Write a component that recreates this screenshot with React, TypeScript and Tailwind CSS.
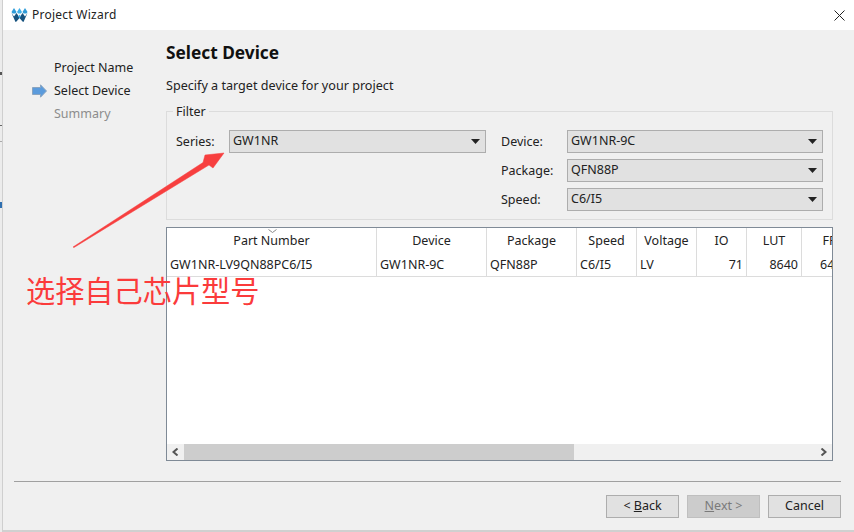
import React from 'react';

const font = { fontFamily: '"Noto Sans", "Noto Sans CJK SC", sans-serif' };

const columns = [
  { label: 'Part Number', value: 'GW1NR-LV9QN88PC6/I5', width: 'w-[210px]', right: false },
  { label: 'Device', value: 'GW1NR-9C', width: 'w-[110px]', right: false },
  { label: 'Package', value: 'QFN88P', width: 'w-[90px]', right: false },
  { label: 'Speed', value: 'C6/I5', width: 'w-[60px]', right: false },
  { label: 'Voltage', value: 'LV', width: 'w-[60px]', right: false },
  { label: 'IO', value: '71', width: 'w-[50px]', right: true },
  { label: 'LUT', value: '8640', width: 'w-[55px]', right: true },
  { label: 'FF', value: '6480', width: 'w-[55px]', right: true },
];

function Combo({ value, width }: { value: string; width: string }) {
  return (
    <div className={`${width} h-[23px] shrink-0 flex items-center justify-between bg-[#e1e1e1] border border-[#adadad] pl-[3px] pr-[4px] text-[12.5px] text-[#222]`}>
      <span>{value}</span>
      <svg width="9" height="5" viewBox="0 0 9 5" className="mr-[1px]"><path d="M0 0h9L4.5 5z" fill="#222" /></svg>
    </div>
  );
}

function Logo() {
  return (
    <svg width="17" height="16" viewBox="0 0 17 16">
      <path d="M0.500 5L3 1l2.500 4-1 1.500h-3z" fill="#2f9bd8" />
      <path d="M6 5l2.500-4L11 5l-1 1.500H7z" fill="#3fb0e8" />
      <path d="M11.500 5L14 1l2.500 4-1 1.500h-3z" fill="#2f9bd8" />
      <path d="M0.500 6L3 9.500 5.500 6l3 4.500L11.500 6 14 9.500 16.500 6l-4 9-1-.5L8.500 11l-3 3.500-1 .5z" fill="#17537f" />
      <path d="M8.500 7.500L9.800 9.500 8.500 11.200 7.200 9.500z" fill="#3fb0e8" />
    </svg>
  );
}

export default function App() {
  return (
    <div style={font} className="relative w-[854px] h-[532px] overflow-hidden bg-[#f0f0f0] flex text-[#222]">
      {/* sliver of the window behind */}
      <div className="relative w-[3px] shrink-0 bg-[#ececec] border-r border-[#cfcfcf]">
        <div className="absolute left-0 top-[72px] w-[2px] h-[3px] bg-[#555]" />
        <div className="absolute left-0 top-[125px] w-[2px] h-[1px] bg-[#666]" />
        <div className="absolute left-0 top-[141px] w-[2px] h-[1px] bg-[#aaa]" />
        <div className="absolute left-0 top-[202px] w-[2px] h-[6px] bg-[#2f6fb0]" />
      </div>

      <div className="flex-1 flex flex-col border-b-2 border-[#d0d0d0]">
        {/* title bar */}
        <div className="h-[30px] shrink-0 bg-white flex items-center pl-[8px] pr-[9px]">
          <Logo />
          <span className="ml-[4px] text-[12px] tracking-[0.25px]">Project Wizard</span>
          <svg className="ml-auto" width="11" height="11" viewBox="0 0 11 11"><path d="M0.500 0.500l10 10M10.500 0.500l-10 10" stroke="#222" strokeWidth="1" fill="none" /></svg>
        </div>

        <div className="flex-1 flex">
          {/* steps */}
          <div className="w-[163px] shrink-0 pt-[29px] pl-[29px] flex flex-col gap-[5px] text-[12.5px] leading-[18px]">
            <div className="pl-[22px]">Project Name</div>
            <div className="flex items-center gap-[7px]">
              <svg width="15" height="14" viewBox="0 0 15 14">
                <path d="M0.500 3.500h8V0.800L14.500 7l-6 6.200V10.500h-8z" fill="#5b9bdc" stroke="#8aa4bf" strokeWidth="1" />
              </svg>
              <span>Select Device</span>
            </div>
            <div className="pl-[22px] text-[#8c8c8c]">Summary</div>
          </div>

          {/* page */}
          <div className="w-[667px] shrink-0 pt-[11px] flex flex-col">
            <div className="text-[17.3px] leading-[24px] font-bold text-[#111]">Select Device</div>
            <div className="mt-[12px] text-[12.6px] leading-[18px]">Specify a target device for your project</div>

            {/* filter group */}
            <div className="relative mt-[16px] h-[109px] shrink-0 border border-[#dcdcdc] px-[9px] pt-[18px] flex justify-between text-[12.5px]">
              <span className="absolute left-[6px] top-[-8px] bg-[#f0f0f0] px-[3px] leading-[16px]">Filter</span>
              <div className="flex items-start">
                <span className="w-[53px] leading-[23px]">Series:</span>
                <Combo value="GW1NR" width="w-[257px]" />
              </div>
              <div className="flex flex-col gap-[6px]">
                {[
                  ['Device:', 'GW1NR-9C'],
                  ['Package:', 'QFN88P'],
                  ['Speed:', 'C6/I5'],
                ].map(([label, value]) => (
                  <div key={label} className="flex items-start">
                    <span className="w-[66px] leading-[23px]">{label}</span>
                    <Combo value={value} width="w-[256px]" />
                  </div>
                ))}
              </div>
            </div>

            {/* part table */}
            <div className="relative mt-[7px] h-[234px] shrink-0 border border-[#7f8a96] bg-white flex flex-col text-[12.5px] overflow-hidden">
              <svg className="absolute left-[101px] top-[1px]" width="9" height="4" viewBox="0 0 9 4"><path d="M0.500 0.500L4.500 3.500 8.500 0.500" stroke="#8a8a8a" fill="none" /></svg>
              <div className="flex-1">
                <div className="flex w-[690px]">
                  {columns.map((c) => (
                    <div key={c.label} className={`${c.width} shrink-0 border-r border-[#dcdcdc] h-[25px] leading-[26px] text-center`}>{c.label}</div>
                  ))}
                </div>
                <div className="flex w-[690px] border-b border-[#dcdcdc]">
                  {columns.map((c) => (
                    <div key={c.label} className={`${c.width} shrink-0 border-r border-[#dcdcdc] h-[23px] leading-[23px] ${c.label === 'FF' ? 'pl-[18px] pr-[3px]' : 'px-[3px]'} ${c.right && c.label !== 'FF' ? 'text-right' : 'text-left'}`}>{c.value}</div>
                  ))}
                </div>
              </div>
              {/* horizontal scrollbar */}
              <div className="h-[16px] shrink-0 bg-[#f0f0f0] flex items-center">
                <div className="w-[17px] flex justify-center">
                  <svg width="7" height="8" viewBox="0 0 7 8"><path d="M5.500 0.500L1.500 4l4 3.500" stroke="#555" strokeWidth="2" fill="none" /></svg>
                </div>
                <div className="w-[390px] h-full bg-[#cdcdcd]" />
                <div className="ml-auto w-[17px] flex justify-center">
                  <svg width="7" height="8" viewBox="0 0 7 8"><path d="M1.500 0.500L5.500 4l-4 3.500" stroke="#555" strokeWidth="2" fill="none" /></svg>
                </div>
              </div>
            </div>
          </div>
        </div>

        {/* footer */}
        <div className="h-[49px] shrink-0 ml-[11px] mr-[13px] border-t border-[#a0a0a0] pt-[13px] flex justify-end gap-[8px] text-[12.5px]">
          <button className="w-[73px] h-[23px] bg-[#e1e1e1] border border-[#adadad] flex items-center justify-center"><span>&lt; <u>B</u>ack</span></button>
          <button className="w-[73px] h-[23px] bg-[#cccccc] border border-[#bfbfbf] text-[#7a7a7a] flex items-center justify-center"><span><u>N</u>ext &gt;</span></button>
          <button className="w-[73px] h-[23px] bg-[#e1e1e1] border border-[#adadad] flex items-center justify-center">Cancel</button>
        </div>
      </div>

      {/* red annotation drawn over the screenshot */}
      <svg className="absolute left-0 top-0 pointer-events-none" width="854" height="532" viewBox="0 0 854 532">
        <path d="M73 247L203 162.500 205 155 224 153 213 168 209 165 74 247.500z" fill="#f73f3f" stroke="#f73f3f" strokeWidth="0.500" />
      </svg>
      <div className="absolute left-[26px] top-[269px] text-[29.2px] leading-[40px] text-[#fb3b3b] whitespace-nowrap" style={{ fontFamily: '"Noto Sans CJK SC", sans-serif' }}>
        选择自己芯片型号
      </div>
    </div>
  );
}
